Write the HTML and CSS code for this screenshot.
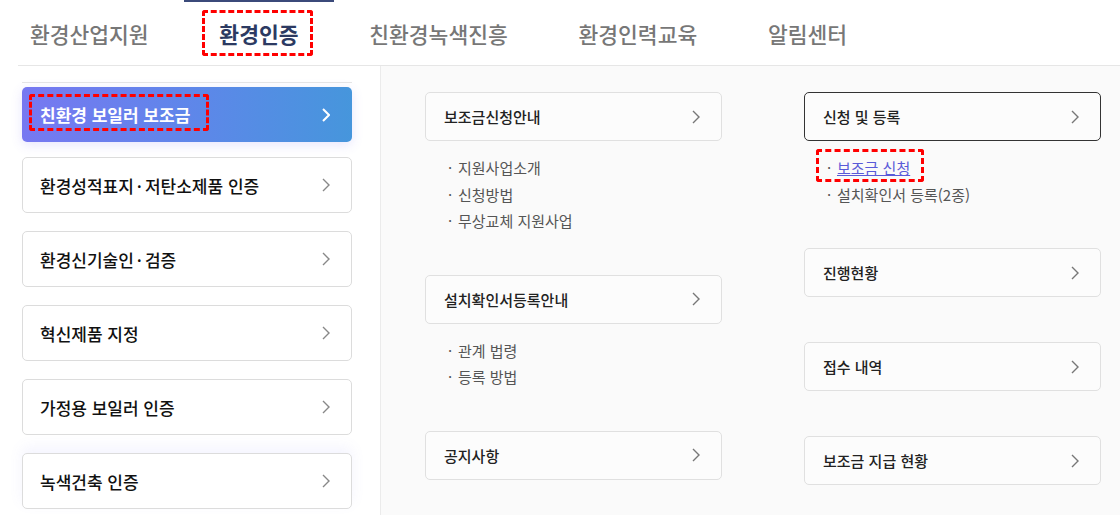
FILE: index.html
```html
<!DOCTYPE html>
<html lang="ko">
<head>
<meta charset="utf-8">
<title>환경인증</title>
<link rel="stylesheet" href="styles.css">
</head>
<body>
<header class="gnb">
  <ul class="gnb-list">
    <li class="gnb-item">환경산업지원</li>
    <li class="gnb-item is-active"><span class="mark mark-nav">환경인증</span></li>
    <li class="gnb-item">친환경녹색진흥</li>
    <li class="gnb-item">환경인력교육</li>
    <li class="gnb-item">알림센터</li>
  </ul>
</header>
<main class="content">
  <aside class="side">
    <ul class="side-list">
      <li class="side-item is-active"><span class="mark mark-side">친환경 보일러 보조금</span><svg class="chev" viewBox="0 0 8 14" width="8" height="14"><polyline points="1,1 7,7 1,13"/></svg></li>
      <li class="side-item"><span>환경성적표지<span class="mid">·</span>저탄소제품 인증</span><svg class="chev" viewBox="0 0 8 14" width="8" height="14"><polyline points="1,1 7,7 1,13"/></svg></li>
      <li class="side-item"><span>환경신기술인<span class="mid">·</span>검증</span><svg class="chev" viewBox="0 0 8 14" width="8" height="14"><polyline points="1,1 7,7 1,13"/></svg></li>
      <li class="side-item"><span>혁신제품 지정</span><svg class="chev" viewBox="0 0 8 14" width="8" height="14"><polyline points="1,1 7,7 1,13"/></svg></li>
      <li class="side-item"><span>가정용 보일러 인증</span><svg class="chev" viewBox="0 0 8 14" width="8" height="14"><polyline points="1,1 7,7 1,13"/></svg></li>
      <li class="side-item is-hover"><span>녹색건축 인증</span><svg class="chev" viewBox="0 0 8 14" width="8" height="14"><polyline points="1,1 7,7 1,13"/></svg></li>
    </ul>
  </aside>
  <section class="panel">
    <div class="col">
      <div class="group">
        <div class="card"><span>보조금신청안내</span><svg class="chev" viewBox="0 0 8 14" width="8" height="14"><polyline points="1,1 7,7 1,13"/></svg></div>
        <ul class="sub">
          <li class="sub-item">지원사업소개</li>
          <li class="sub-item">신청방법</li>
          <li class="sub-item">무상교체 지원사업</li>
        </ul>
      </div>
      <div class="group">
        <div class="card"><span>설치확인서등록안내</span><svg class="chev" viewBox="0 0 8 14" width="8" height="14"><polyline points="1,1 7,7 1,13"/></svg></div>
        <ul class="sub">
          <li class="sub-item">관계 법령</li>
          <li class="sub-item">등록 방법</li>
        </ul>
      </div>
      <div class="group solo">
        <div class="card"><span>공지사항</span><svg class="chev" viewBox="0 0 8 14" width="8" height="14"><polyline points="1,1 7,7 1,13"/></svg></div>
      </div>
    </div>
    <div class="col">
      <div class="group">
        <div class="card is-current"><span>신청 및 등록</span><svg class="chev" viewBox="0 0 8 14" width="8" height="14"><polyline points="1,1 7,7 1,13"/></svg></div>
        <ul class="sub">
          <li class="sub-item"><span class="mark mark-sub"><span class="dot">·</span><a class="sub-link" href="#">보조금 신청</a></span></li>
          <li class="sub-item"><span class="dot">·</span>설치확인서 등록(2종)</li>
        </ul>
      </div>
      <div class="group solo">
        <div class="card"><span>진행현황</span><svg class="chev" viewBox="0 0 8 14" width="8" height="14"><polyline points="1,1 7,7 1,13"/></svg></div>
      </div>
      <div class="group solo">
        <div class="card"><span>접수 내역</span><svg class="chev" viewBox="0 0 8 14" width="8" height="14"><polyline points="1,1 7,7 1,13"/></svg></div>
      </div>
      <div class="group solo">
        <div class="card"><span>보조금 지급 현황</span><svg class="chev" viewBox="0 0 8 14" width="8" height="14"><polyline points="1,1 7,7 1,13"/></svg></div>
      </div>
    </div>
  </section>
</main>
</body>
</html>
```
FILE: styles.css
```css
* { box-sizing: border-box; margin: 0; padding: 0; }
html, body { width: 1120px; height: 515px; overflow: hidden; }
body {
  font-family: "Noto Sans CJK KR", "Noto Sans", sans-serif;
  background: #fff;
  color: #222;
}
ul { list-style: none; }
a { color: inherit; }

/* top navigation */
.gnb {
  height: 66px;
  margin-left: 18px;
  border-bottom: 1px solid #e6e6e6;
}
.gnb-list {
  display: flex;
  height: 65px;
  margin-left: -23.5px;
}
.gnb-item {
  position: relative;
  display: flex;
  align-items: center;
  padding: 2px 35.4px 0;
  font-size: 21.5px;
  font-weight: 500;
  color: #777;
}
.gnb-item.is-active {
  color: #2c3a62;
  font-weight: 700;
}
.gnb-item.is-active::before {
  content: "";
  position: absolute;
  top: 0;
  left: 0;
  right: 0;
  height: 2px;
  background: #3b4a7a;
}

/* annotation boxes */
.mark {
  position: relative;
  display: inline-block;
}
.mark::after {
  content: "";
  position: absolute;
  border: 3px dashed #f00;
  border-radius: 3px;
}
.mark-nav { line-height: 30px; }
.mark-nav::after { top: -9px; bottom: -7px; left: -17px; right: -15px; }
.mark-side { line-height: 26px; }
.mark-side::after { top: -8px; bottom: -3px; left: -11px; right: -19px; }
.mark-sub::after { top: -6px; bottom: 0; left: -11px; right: -14px; }

/* layout */
.content {
  display: flex;
  height: 449px;
  margin-left: 18px;
}
.side {
  width: 362px;
  padding: 16px 28px 0 4px;
}
.side-list {
  display: flex;
  flex-direction: column;
  gap: 18px;
  padding-top: 4px;
  border-top: 1px solid #e6e6e6;
}
.side-item {
  display: flex;
  align-items: center;
  justify-content: space-between;
  flex: none;
  height: 56px;
  padding: 0 21px 0 17px;
  border: 1px solid #dcdcdc;
  border-radius: 5px;
  background: #fff;
  font-size: 17px;
  font-weight: 500;
  color: #111;
}
.mid { margin: 0 3px; }
.side-item.is-active {
  height: 55px;
  margin-bottom: -3px;
  padding: 0 22px 0 18px;
  border: 0;
  background: linear-gradient(90deg, #7778f1 0%, #5f86ea 50%, #4696dc 100%);
  box-shadow: 0 3px 12px rgba(105, 95, 240, 0.16);
  color: #fff;
  font-weight: 700;
}
.side-item.is-hover {
  box-shadow: 0 -6px 14px rgba(120, 110, 240, 0.08);
}
.chev {
  flex: none;
  fill: none;
  stroke: #888;
  stroke-width: 1.4;
}
.is-active .chev {
  stroke: #fff;
  stroke-width: 2;
}

/* right panel */
.panel {
  flex: 1;
  display: flex;
  gap: 82px;
  padding: 26px 19px 0 44px;
  background: #fafafa;
  border-left: 1px solid #ebebeb;
}
.col {
  flex: 1;
  display: flex;
  flex-direction: column;
}
.group { margin-bottom: 40px; }
.group.solo { margin-bottom: 45px; }
.card {
  display: flex;
  align-items: center;
  justify-content: space-between;
  height: 49px;
  padding: 0 21px 0 18px;
  border: 1px solid #e0e0e0;
  border-radius: 5px;
  background: #fcfcfc;
  font-size: 15px;
  font-weight: 500;
  color: #222;
}
.card .chev { stroke: #777; }
.card.is-current { border-color: #333; }
.sub {
  padding: 14px 0 0 23px;
  font-size: 15px;
  line-height: 26.5px;
  color: #555;
}
.sub-item::before {
  content: "·";
  display: inline-block;
  width: 10px;
}
.sub-item:has(.dot)::before { content: none; }
.dot {
  display: inline-block;
  width: 10px;
}
.sub-link {
  color: #5a5ad8;
  text-decoration: underline;
}
```
